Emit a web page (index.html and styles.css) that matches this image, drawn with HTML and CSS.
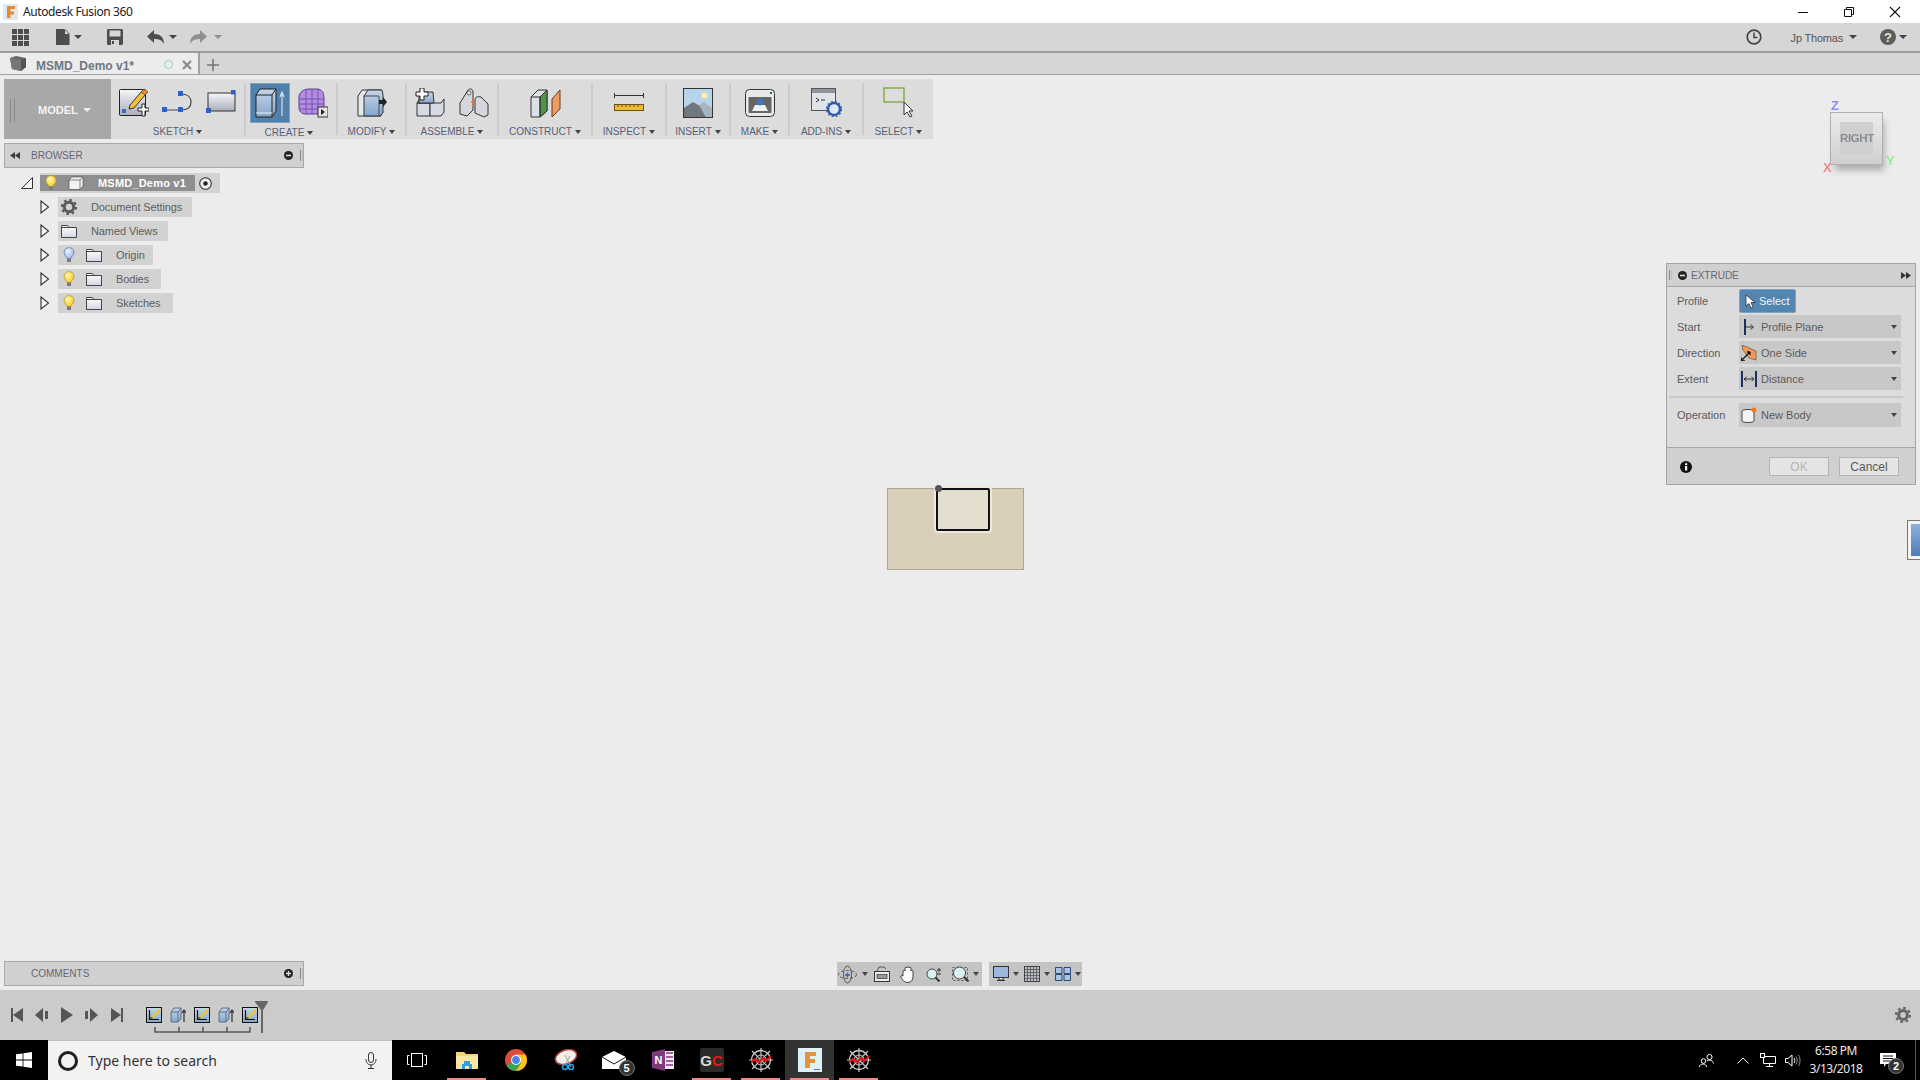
FILE: index.html
```html
<!DOCTYPE html>
<html lang="en">
<head>
<meta charset="utf-8">
<title>Autodesk Fusion 360</title>
<link rel="stylesheet" href="styles.css">
</head>
<body>
<svg class="defs" width="0" height="0">
  <defs>
    <linearGradient id="gBlue" x1="0" y1="0" x2="0" y2="1"><stop offset="0" stop-color="#c5d6ea"/><stop offset="1" stop-color="#86a5cc"/></linearGradient>
    <linearGradient id="gGrey" x1="0" y1="0" x2="0" y2="1"><stop offset="0" stop-color="#f6f6f8"/><stop offset="1" stop-color="#a9aebb"/></linearGradient>
    <linearGradient id="gFolder" x1="0" y1="0" x2="0" y2="1"><stop offset="0" stop-color="#fff"/><stop offset="1" stop-color="#d3d8e2"/></linearGradient>
    <radialGradient id="gBulbY" cx=".4" cy=".35" r=".7"><stop offset="0" stop-color="#fff8b0"/><stop offset="1" stop-color="#f2c81e"/></radialGradient>
    <radialGradient id="gBulbB" cx=".4" cy=".35" r=".7"><stop offset="0" stop-color="#eef3ff"/><stop offset="1" stop-color="#98b2e8"/></radialGradient>
    <symbol id="bulbY" viewBox="0 0 12 16"><path d="M6 .5a5 5 0 0 1 3 9l-1 2H4l-1-2a5 5 0 0 1 3-9z" fill="url(#gBulbY)" stroke="#b8982a" stroke-width=".7"/><rect x="4" y="11.500" width="4" height="3.500" fill="#7c7c7c"/></symbol>
    <symbol id="bulbB" viewBox="0 0 12 16"><path d="M6 .5a5 5 0 0 1 3 9l-1 2H4l-1-2a5 5 0 0 1 3-9z" fill="url(#gBulbB)" stroke="#6078a8" stroke-width=".7"/><rect x="4" y="11.500" width="4" height="3.500" fill="#7c7c7c"/></symbol>
    <symbol id="folder" viewBox="0 0 16 14"><path d="M.5 13.500V1.500h6l1.500 2h7.500v10z" fill="url(#gFolder)" stroke="#444"/><path d="M.5 3.500h7.500" stroke="#444"/></symbol>
    <symbol id="expand" viewBox="0 0 10 14"><path d="M1 1l7.500 6L1 13z" fill="#f4f4f4" stroke="#3e3e3e" stroke-width="1.200"/></symbol>
    <symbol id="tlSketch" viewBox="0 0 16 16"><rect x=".5" y=".5" width="15" height="15" fill="url(#gBlue)" stroke="#111"/><path d="M3.500 3v9.500H13" fill="none" stroke="#111" stroke-width="1.200"/><path d="M5 10l8-8 2 1-8 8-3 1z" fill="#f2c81e"/><path d="M5 10l-1 2 3-1z" fill="#222"/></symbol>
    <symbol id="tlExtrude" viewBox="0 0 16 16"><path d="M1 5l3-4h7v11l-3 3H1z" fill="url(#gBlue)" stroke="#5d6f8a"/><path d="M1 5h7v10M8 5l3-4" fill="none" stroke="#5d6f8a"/><path d="M14 15V4M12 6l2-3 2 3" fill="none" stroke="#333" stroke-width="1.200"/></symbol>
    <symbol id="spider" viewBox="0 0 24 24"><circle cx="12" cy="12" r="9.500" fill="none" stroke="#cfcfcf" stroke-width="1.300"/><circle cx="12" cy="12" r="5" fill="none" stroke="#cfcfcf"/><path d="M12 0v24M0 12h24M3 3l18 18M21 3L3 21" stroke="#cfcfcf" stroke-width="1.100"/><path d="M2 14l4-3 4 3 4-4 3 3 5-5" fill="none" stroke="#e01212" stroke-width="2.200"/></symbol>
  </defs>
</svg>

<header class="titlebar">
  <svg class="ic app-ic" width="15" height="16" viewBox="0 0 15 16"><rect width="15" height="16" fill="#dfe9f2"/><path d="M4 2h8v3H7.500v2.500H11v3H7.500V14H4z" fill="#e78a2e"/></svg>
  <span class="title-text">Autodesk Fusion 360</span>
  <div class="winctl">
    <svg class="ic" width="12" height="12" viewBox="0 0 12 12"><path d="M1 6.500h10" stroke="#111"/></svg>
    <svg class="ic" width="12" height="12" viewBox="0 0 12 12"><path d="M1.500 3.500h7v7h-7zM3.500 3.500v-2h7v7h-2" fill="none" stroke="#111"/></svg>
    <svg class="ic" width="12" height="12" viewBox="0 0 12 12"><path d="M1 1l10 10M11 1L1 11" stroke="#111" stroke-width="1.100"/></svg>
  </div>
</header>

<div class="menubar">
  <svg class="ic m-grid" width="17" height="17" viewBox="0 0 17 17"><path d="M0 0h5v5H0zM6 0h5v5H6zM12 0h5v5h-5zM0 6h5v5H0zM6 6h5v5H6zM12 6h5v5h-5zM0 12h5v5H0zM6 12h5v5H6zM12 12h5v5h-5z" fill="#4d4d4d"/></svg>
  <svg class="ic m-file" width="14" height="16" viewBox="0 0 14 16"><path d="M0 0h8l5.500 5.500V16H0zM9 0v5h5z" fill="#4d4d4d"/></svg>
  <span class="caret m-c1"></span>
  <svg class="ic m-save" width="16" height="16" viewBox="0 0 16 16"><path d="M1 0h14l1 1v14l-1 1H1l-1-1V1z" fill="#4d4d4d"/><rect x="2.500" y="1.500" width="11" height="6" fill="#d6d6d6"/><rect x="4" y="11" width="8" height="5" fill="#d6d6d6"/><rect x="5" y="12" width="2" height="3" fill="#4d4d4d"/></svg>
  <svg class="ic m-undo" width="17" height="14" viewBox="0 0 17 14"><path d="M7 0v4c6 0 10 3 10 10-2-4-5-5-10-5v4L0 6.500z" fill="#4d4d4d"/></svg>
  <span class="caret m-c2"></span>
  <svg class="ic m-redo" width="17" height="14" viewBox="0 0 17 14"><path d="M10 0v4C4 4 0 7 0 14c2-4 5-5 10-5v4l7-6.500z" fill="#8f8f8f"/></svg>
  <span class="caret m-c3"></span>
  <div class="menu-right">
    <svg class="ic" width="16" height="16" viewBox="0 0 16 16"><circle cx="8" cy="8" r="6.800" fill="none" stroke="#444" stroke-width="1.700"/><path d="M8 3.500V8.500h3.500" fill="none" stroke="#444" stroke-width="1.500"/></svg>
    <span class="user">Jp Thomas</span>
    <span class="caret m-c4"></span>
    <svg class="ic m-help" width="16" height="16" viewBox="0 0 16 16"><circle cx="8" cy="8" r="8" fill="#5d5d5d"/><text x="8" y="12.500" class="help-q">?</text></svg>
    <span class="caret m-c5"></span>
  </div>
</div>

<div class="tabbar">
  <div class="tab">
    <svg class="ic" width="16" height="15" viewBox="0 0 16 15"><path d="M0 2l6-2 10 2v9l-5 4-9-2z" fill="#666"/><path d="M0 2l11 2v11l-9-2z" fill="#777"/><path d="M11 4l5-2v9l-5 4z" fill="#555"/></svg>
    <span class="tab-name">MSMD_Demo v1*</span>
    <span class="tab-dot"></span>
    <svg class="ic tab-x" width="10" height="10" viewBox="0 0 10 10"><path d="M1 1l8 8M9 1L1 9" stroke="#8a8a8a" stroke-width="2.200"/></svg>
  </div>
  <svg class="ic tab-plus" width="12" height="12" viewBox="0 0 12 12"><path d="M6 0v12M0 6h12" stroke="#777" stroke-width="1.600"/></svg>
</div>

<main class="viewport">
  <div class="toolbar">
    <div class="model"><span class="grip"></span><span class="model-label">MODEL</span><span class="caret caret-w"></span></div>

    <div class="tg g-sketch">
      <div class="tg-icons icons-sketch">
        <svg class="ic" width="30" height="30" viewBox="0 0 30 30"><rect x=".5" y="1.500" width="26" height="26" rx="1" fill="url(#gGrey)" stroke="#222"/><path d="M11 17L23 3l4 3-12 14-5 1z" fill="#f2c233" stroke="#333"/><path d="M22 4l3-3 4 3-3 3z" fill="#e8893b" stroke="#333" stroke-width=".6"/><path d="M23 16h3v4h4v3h-4v5h-3v-5h-4v-3h4z" fill="#fff" stroke="#222"/><rect x="3" y="21" width="4" height="4" fill="#3a6ac4"/></svg>
        <svg class="ic" width="31" height="30" viewBox="0 0 31 30"><path d="M3 22h16M19 22c7 0 10-3 10-8s-4-8-10-8" fill="none" stroke="#444" stroke-width="1.200"/><rect x="0" y="19" width="5" height="5" fill="#2f62c6"/><rect x="16" y="19" width="5" height="5" fill="#2f62c6"/><rect x="16" y="3" width="5" height="5" fill="#2f62c6"/></svg>
        <svg class="ic" width="30" height="30" viewBox="0 0 30 30"><rect x="2" y="5" width="27" height="18" fill="url(#gGrey)" stroke="#333"/><rect x="25" y="2" width="4.500" height="4.500" fill="#2f62c6"/><rect x="0" y="20" width="5" height="5" fill="#2f62c6"/></svg>
      </div>
      <div class="tg-label">SKETCH<span class="caret"></span></div>
    </div>
    <span class="sep"></span>

    <div class="tg g-create">
      <div class="tg-icons gap8">
        <div class="active-tool">
          <svg class="ic" width="30" height="30" viewBox="0 0 30 30"><path d="M1 7l4-6h16v22l-4 6H1z" fill="url(#gBlue)" stroke="#222"/><path d="M1 7h16v22M17 7l4-6" fill="none" stroke="#222"/><path d="M1 25h16" stroke="#e9eef6"/><path d="M27 28V5M25 9l2-5 2 5" fill="none" stroke="#d7dde6" stroke-width="1.200"/></svg>
        </div>
        <svg class="ic" width="30" height="30" viewBox="0 0 30 30"><path d="M1 8c2-6 6-7 11-7h7c5 0 7 4 7 9v12c0 3-2 4-5 4H8c-5 0-7-3-7-7z" fill="#b28ce0" stroke="#5c3e8c"/><path d="M1 11h25M1 16h25M1 21h25M8 1v25M14 1v25M20 1v25" stroke="#6f4da8" stroke-width=".9"/><rect x="20" y="19" width="10" height="10" fill="#e4e4e4" stroke="#333"/><path d="M23 21l4 3-4 3z" fill="#222"/></svg>
      </div>
      <div class="tg-label">CREATE<span class="caret"></span></div>
    </div>
    <span class="sep"></span>

    <div class="tg g-modify">
      <div class="tg-icons">
        <svg class="ic" width="30" height="30" viewBox="0 0 30 30"><path d="M1 8l4-6h19v26H1z" fill="#e6e8ee" stroke="#333"/><path d="M7 8l4-6h14l1 5v18l-3 3H7z" fill="url(#gBlue)" stroke="#333"/><path d="M7 8h15v20" fill="none" stroke="#445"/><path d="M22 12h4V9l4 5-4 5v-3h-4z" fill="#222"/></svg>
      </div>
      <div class="tg-label">MODIFY<span class="caret"></span></div>
    </div>
    <span class="sep"></span>

    <div class="tg g-assemble">
      <div class="tg-icons gap14">
        <svg class="ic" width="30" height="30" viewBox="0 0 30 30"><path d="M2 15h13v13H2z" fill="#d6dbe3" stroke="#333"/><path d="M15 15h11l3-4v13l-3 4H15z" fill="#d6dbe3" stroke="#333"/><path d="M2 15l3-5h13l-3 5z" fill="#c6cad2" stroke="#333"/><path d="M4 4h14l1 11H4z" fill="url(#gBlue)" stroke="#333"/><path d="M5 0h4v4h4v4H9v4H5V8H1V4h4z" fill="#fff" stroke="#222"/></svg>
        <svg class="ic" width="30" height="30" viewBox="0 0 30 30"><path d="M1 15l8-13c2-2 5-1 5 2v18l-6 6-7-2z" fill="#d4d8de" stroke="#333"/><path d="M16 12c0-3 3-4 6-3l7 7v11l-4 2-9-4z" fill="#d4d8de" stroke="#333"/><path d="M14 10v8M12 14h4" stroke="#e8742a" stroke-width="1.400"/><circle cx="10" cy="5" r="2" fill="#f2f2f2" stroke="#333" stroke-width=".7"/></svg>
      </div>
      <div class="tg-label">ASSEMBLE<span class="caret"></span></div>
    </div>
    <span class="sep"></span>

    <div class="tg g-construct">
      <div class="tg-icons">
        <svg class="ic" width="31" height="30" viewBox="0 0 31 30"><path d="M1 9l7-7h9v21l-7 6H1z" fill="#dce0e6" stroke="#333"/><path d="M10 9l7-7v21l-7 6z" fill="#4f9344" stroke="#333"/><path d="M1 9h9v20" fill="none" stroke="#333"/><path d="M22 11l8-9v19l-8 8z" fill="#ee9a63" stroke="#6b3c1c"/></svg>
      </div>
      <div class="tg-label">CONSTRUCT<span class="caret"></span></div>
    </div>
    <span class="sep"></span>

    <div class="tg g-inspect">
      <div class="tg-icons">
        <svg class="ic" width="30" height="24" viewBox="0 0 30 24"><path d="M.5 2v5M29.500 2v5M.5 4.500h29" fill="none" stroke="#333"/><rect x=".5" y="13.500" width="29" height="6" fill="#ecbc37" stroke="#6b5514"/><path d="M4 14v2M8 14v2M12 14v2M16 14v2M20 14v2M24 14v2" stroke="#6b5514"/></svg>
      </div>
      <div class="tg-label">INSPECT<span class="caret"></span></div>
    </div>
    <span class="sep"></span>

    <div class="tg g-insert">
      <div class="tg-icons">
        <svg class="ic" width="30" height="30" viewBox="0 0 30 30"><rect x=".5" y=".5" width="29" height="29" fill="#b7d4ec" stroke="#333"/><path d="M1 29V20l9-6 7 4 6 11z" fill="#72767f"/><path d="M16 17l5-3 8 6v9h-6z" fill="#a8b4bd"/><rect x="19" y="5" width="5" height="5" fill="#fbf5c0" stroke="#f0e29a"/></svg>
      </div>
      <div class="tg-label">INSERT<span class="caret"></span></div>
    </div>
    <span class="sep"></span>

    <div class="tg g-make">
      <div class="tg-icons">
        <svg class="ic" width="30" height="28" viewBox="0 0 30 28"><rect x=".5" y=".5" width="29" height="27" rx="4" fill="#e9e9e9" stroke="#333"/><rect x="3.500" y="8" width="23" height="16" rx="1" fill="#666"/><path d="M7 22l3-6h10l3 6z" fill="#f0f0f0"/><path d="M12 10h6v4l-3 3-3-3z" fill="#3a78c8"/><rect x="25" y="3" width="2" height="2" fill="#1a7c2a"/></svg>
      </div>
      <div class="tg-label">MAKE<span class="caret"></span></div>
    </div>
    <span class="sep"></span>

    <div class="tg g-addins">
      <div class="tg-icons">
        <svg class="ic" width="31" height="29" viewBox="0 0 31 29"><rect x=".5" y=".5" width="24" height="22" fill="#dfe3ea" stroke="#555"/><rect x="1" y="1" width="23" height="4" fill="#8f939b"/><path d="M5 10l3 2-3 2M10 12h4" fill="none" stroke="#333"/><circle cx="23" cy="21" r="6" fill="#dfe8f6" stroke="#2e5aa6" stroke-width="2.400"/><circle cx="23" cy="21" r="7.500" fill="none" stroke="#2e5aa6" stroke-width="1.300" stroke-dasharray="2 2"/></svg>
      </div>
      <div class="tg-label">ADD-INS<span class="caret"></span></div>
    </div>
    <span class="sep"></span>

    <div class="tg g-select">
      <div class="tg-icons">
        <svg class="ic" width="31" height="31" viewBox="0 0 31 31"><rect x="1" y="1" width="20" height="14" fill="none" stroke="#6ea32a" stroke-width="1.200"/><path d="M21 15v13l3-3 3 5 2-1-3-5h4z" fill="#f3f3f3" stroke="#333"/></svg>
      </div>
      <div class="tg-label">SELECT<span class="caret"></span></div>
    </div>
  </div>

  <section class="panel browser">
    <svg class="ic" width="10" height="7" viewBox="0 0 10 7"><path d="M5 0v7L0 3.500zM10 0v7L5 3.500z" fill="#3a3a3a"/></svg>
    <span class="panel-title">BROWSER</span>
    <svg class="ic panel-btn" width="9" height="9" viewBox="0 0 9 9"><circle cx="4.500" cy="4.500" r="4.500" fill="#222"/><rect x="2" y="3.700" width="5" height="1.600" fill="#ddd"/></svg>
    <span class="panel-grip"></span>
  </section>

  <ul class="tree">
    <li class="root-row">
      <svg class="ic root-tri" width="12" height="12" viewBox="0 0 12 12"><path d="M.5 11.500L11.500.5v11z" fill="#f4f4f4" stroke="#333"/></svg>
      <div class="root-wrap">
        <div class="root-label">
          <svg class="ic bulb-root" width="12" height="16"><use href="#bulbY"/></svg>
          <svg class="ic" width="16" height="14" viewBox="0 0 16 14"><path d="M1 4l3-3h11v9l-3 3.500H1z" fill="#f2f2f2" stroke="#555" stroke-width=".7"/><path d="M1 4h11v9.500M12 4l3-3" fill="none" stroke="#555" stroke-width=".7"/></svg>
          <span class="root-name">MSMD_Demo v1</span>
        </div>
        <svg class="ic radio" width="13" height="13" viewBox="0 0 13 13"><circle cx="6.500" cy="6.500" r="5.800" fill="#f0f0f0" stroke="#333" stroke-width="1.100"/><circle cx="6.500" cy="6.500" r="2.200" fill="#222"/></svg>
      </div>
    </li>
    <li class="row">
      <svg class="ic" width="10" height="14"><use href="#expand"/></svg>
      <div class="node w-doc">
        <svg class="ic" width="16" height="16" viewBox="0 0 16 16"><circle cx="8" cy="8" r="4.700" fill="none" stroke="#5c5c5c" stroke-width="3"/><circle cx="8" cy="8" r="7" fill="none" stroke="#5c5c5c" stroke-width="2.200" stroke-dasharray="2.700 2.800"/></svg>
        <span class="node-text">Document Settings</span>
      </div>
    </li>
    <li class="row">
      <svg class="ic" width="10" height="14"><use href="#expand"/></svg>
      <div class="node w-views">
        <svg class="ic" width="16" height="14"><use href="#folder"/></svg>
        <span class="node-text">Named Views</span>
      </div>
    </li>
    <li class="row">
      <svg class="ic" width="10" height="14"><use href="#expand"/></svg>
      <div class="node w-origin">
        <svg class="ic bulb" width="12" height="16"><use href="#bulbB"/></svg>
        <svg class="ic" width="16" height="14"><use href="#folder"/></svg>
        <span class="node-text">Origin</span>
      </div>
    </li>
    <li class="row">
      <svg class="ic" width="10" height="14"><use href="#expand"/></svg>
      <div class="node w-bodies">
        <svg class="ic bulb" width="12" height="16"><use href="#bulbY"/></svg>
        <svg class="ic" width="16" height="14"><use href="#folder"/></svg>
        <span class="node-text">Bodies</span>
      </div>
    </li>
    <li class="row">
      <svg class="ic" width="10" height="14"><use href="#expand"/></svg>
      <div class="node w-sketches">
        <svg class="ic bulb" width="12" height="16"><use href="#bulbY"/></svg>
        <svg class="ic" width="16" height="14"><use href="#folder"/></svg>
        <span class="node-text">Sketches</span>
      </div>
    </li>
  </ul>

  <section class="panel comments">
    <span class="panel-title">COMMENTS</span>
    <svg class="ic panel-btn" width="9" height="9" viewBox="0 0 9 9"><circle cx="4.500" cy="4.500" r="4.500" fill="#222"/><path d="M2 4.500h5M4.500 2v5" stroke="#ddd" stroke-width="1.400"/></svg>
    <span class="panel-grip"></span>
  </section>

  <div class="viewcube">
    <span class="vc-z">Z</span>
    <div class="vc-face"><span class="vc-text">RIGHT</span></div>
    <span class="vc-y">Y</span>
    <span class="vc-x">X</span>
  </div>

  <div class="sketch"><span class="sketch-dot"></span><div class="sketch-inner"></div></div>

  <aside class="extrude">
    <div class="ex-head">
      <span class="ex-grip"></span>
      <svg class="ic" width="9" height="9" viewBox="0 0 9 9"><circle cx="4.500" cy="4.500" r="4.500" fill="#222"/><rect x="2" y="3.700" width="5" height="1.600" fill="#ddd"/></svg>
      <span class="ex-title">EXTRUDE</span>
      <svg class="ic ex-more" width="10" height="7" viewBox="0 0 10 7"><path d="M0 0v7l5-3.500zM5 0v7l5-3.500z" fill="#333"/></svg>
    </div>
    <div class="ex-body">
      <div class="ex-row first">
        <span class="ex-label">Profile</span>
        <div class="ex-select-btn">
          <svg class="ic" width="11" height="15" viewBox="0 0 11 15"><path d="M1 1v11l3-2.500 2 4.500 2-1-2-4.500h4z" fill="#fff" stroke="#333" stroke-width=".8"/></svg>
          <span>Select</span>
        </div>
      </div>
      <div class="ex-row">
        <span class="ex-label">Start</span>
        <div class="ex-drop">
          <svg class="ic" width="16" height="16" viewBox="0 0 16 16"><path d="M4 0v16" stroke="#16335f" stroke-width="2"/><path d="M5 8h7M9.500 5.500L12.500 8l-3 2.500" fill="none" stroke="#333"/></svg>
          <span>Profile Plane</span><span class="caret drop-caret"></span>
        </div>
      </div>
      <div class="ex-row">
        <span class="ex-label">Direction</span>
        <div class="ex-drop">
          <svg class="ic" width="16" height="16" viewBox="0 0 16 16"><path d="M1 0l14 6v9l-7-2-6-8z" fill="#ef9a5a" stroke="#7a4a20" stroke-width=".7"/><path d="M0 16L9 7M0 16v-4M0 16h4M9 7v3M9 7H6" stroke="#111" stroke-width="1.300" fill="none"/></svg>
          <span>One Side</span><span class="caret drop-caret"></span>
        </div>
      </div>
      <div class="ex-row">
        <span class="ex-label">Extent</span>
        <div class="ex-drop">
          <svg class="ic" width="16" height="16" viewBox="0 0 16 16"><path d="M1 0v16M15 0v16" stroke="#16335f" stroke-width="2"/><path d="M3 8h10M5.500 6L3 8l2.500 2M10.500 6L13 8l-2.500 2" fill="none" stroke="#333"/></svg>
          <span>Distance</span><span class="caret drop-caret"></span>
        </div>
      </div>
      <div class="ex-sep"></div>
      <div class="ex-row">
        <span class="ex-label">Operation</span>
        <div class="ex-drop tall">
          <svg class="ic" width="16" height="16" viewBox="0 0 16 16"><path d="M1 4c0-2 12-2 12 0v10c0 2-12 2-12 0z" fill="#f4f4f4" stroke="#444"/><circle cx="13" cy="3" r="2.500" fill="#f07a1c"/></svg>
          <span>New Body</span><span class="caret drop-caret"></span>
        </div>
      </div>
    </div>
    <div class="ex-foot">
      <svg class="ic ex-info" width="12" height="12" viewBox="0 0 12 12"><circle cx="6" cy="6" r="6" fill="#111"/><rect x="5" y="5" width="2.200" height="4.500" fill="#fff"/><rect x="5" y="2.300" width="2.200" height="1.800" fill="#fff"/></svg>
      <button class="btn btn-off">OK</button>
      <button class="btn">Cancel</button>
    </div>
  </aside>

  <div class="edge-thumb"><span></span></div>

  <div class="navbars">
    <div class="navgroup ng-a">
      <svg class="ic" width="19" height="19" viewBox="0 0 19 19"><ellipse cx="9.500" cy="9.500" rx="4" ry="8.500" fill="none" stroke="#555"/><ellipse cx="9.500" cy="9.500" rx="9" ry="4" fill="none" stroke="#555" stroke-dasharray="3 2"/><path d="M7 10h5M9.500 7.500v5" stroke="#2f62c6" stroke-width="1.300"/></svg>
      <span class="caret nav-c1"></span>
      <svg class="ic nav-b" width="16" height="16" viewBox="0 0 16 16"><rect x=".5" y="5.500" width="15" height="10" fill="#eee" stroke="#333"/><rect x="3" y="8.500" width="10" height="4" fill="#999" stroke="#333" stroke-width=".7"/><path d="M3 5l2-4h5l2 2" fill="none" stroke="#555"/></svg>
      <svg class="ic nav-c" width="16" height="17" viewBox="0 0 16 17"><path d="M3 10V5c0-1 2-1 2 0V2c0-1 2-1 2 0v-.5c0-1 2-1 2 0V2c0-1 2-1 2 0v3c0-1 2-1 2 0v6c0 3-2 5.500-5 5.500S3 15 1 11c-1-2 1-2 2-1z" fill="#fafafa" stroke="#333" stroke-width=".9"/></svg>
      <svg class="ic nav-c" width="16" height="15" viewBox="0 0 16 15"><circle cx="6" cy="7" r="5" fill="#d9f0f4" stroke="#444"/><path d="M9.500 10.500l4 4" stroke="#333" stroke-width="2"/><path d="M11 3h4M13 1v4M11 7h4" stroke="#333"/></svg>
      <svg class="ic nav-c" width="17" height="16" viewBox="0 0 17 16"><rect x=".5" y="1.500" width="15" height="13" fill="none" stroke="#555" stroke-dasharray="2 2"/><circle cx="7.500" cy="7" r="6" fill="#d9f0f4" stroke="#444"/><path d="M12 11l4.500 4.500" stroke="#333" stroke-width="2"/></svg>
      <span class="caret nav-c2"></span>
    </div>
    <div class="navgroup ng-b">
      <svg class="ic" width="16" height="16" viewBox="0 0 16 16"><rect x=".5" y=".5" width="15" height="11" fill="#9ab8de" stroke="#333"/><path d="M6 12v2h4v-2M4 14.500h8" fill="#eee" stroke="#333"/></svg>
      <span class="caret nav-c3"></span>
      <svg class="ic nav-d" width="16" height="16" viewBox="0 0 16 16"><rect x=".5" y=".5" width="15" height="15" fill="#b8bcc5" stroke="#444"/><path d="M3.500 1v14M6.500 1v14M9.500 1v14M12.500 1v14M1 3.500h14M1 6.500h14M1 9.500h14M1 12.500h14" stroke="#555" stroke-width=".8"/></svg>
      <span class="caret nav-c3"></span>
      <svg class="ic nav-d" width="16" height="14" viewBox="0 0 16 14"><path d="M.5.500h6.500v6H.5zM9 .5h6.500v6H9zM.5 7.500h6.500v6H.5zM9 7.500h6.500v6H9z" fill="#a9c3e2" stroke="#2c4a7a"/></svg>
      <span class="caret nav-c3"></span>
    </div>
  </div>
</main>

<div class="timeline">
  <svg class="ic" width="12" height="14" viewBox="0 0 12 14"><path d="M0 0h2v14H0zM12 0v14L2 7z" fill="#555"/></svg>
  <svg class="ic t-gap1" width="13" height="14" viewBox="0 0 13 14"><path d="M8 0v14L0 7zM10 3h3v8h-3z" fill="#555"/></svg>
  <svg class="ic t-gap2" width="12" height="16" viewBox="0 0 12 16"><path d="M0 0v16l12-8z" fill="#555"/></svg>
  <svg class="ic t-gap3" width="13" height="14" viewBox="0 0 13 14"><path d="M5 0v14l8-7zM0 3h3v8H0z" fill="#555"/></svg>
  <svg class="ic t-gap4" width="12" height="14" viewBox="0 0 12 14"><path d="M10 0h2v14h-2zM0 0v14l10-7z" fill="#555"/></svg>
  <div class="tl-items">
    <svg class="ic" width="16" height="16"><use href="#tlSketch"/></svg>
    <svg class="ic" width="16" height="16"><use href="#tlExtrude"/></svg>
    <svg class="ic" width="16" height="16"><use href="#tlSketch"/></svg>
    <svg class="ic" width="16" height="16"><use href="#tlExtrude"/></svg>
    <svg class="ic" width="16" height="16"><use href="#tlSketch"/></svg>
    <svg class="ic tl-bracket" width="97" height="6" viewBox="0 0 97 6"><path d="M1 0v5h95V0M25 0v5M49 0v5M73 0v5" fill="none" stroke="#5a5a5a" stroke-width="1.600"/></svg>
    <svg class="ic tl-marker" width="13" height="32" viewBox="0 0 13 32"><path d="M0 0h13v1l-5 8v23H6V9L0 1z" fill="#666"/></svg>
  </div>
  <svg class="ic tl-gear" width="16" height="16" viewBox="0 0 16 16"><circle cx="8" cy="8" r="4.400" fill="none" stroke="#666" stroke-width="3"/><circle cx="8" cy="8" r="7" fill="none" stroke="#666" stroke-width="2.200" stroke-dasharray="2.700 2.800"/></svg>
</div>

<footer class="taskbar">
  <div class="tb-start">
    <svg class="ic" width="16" height="16" viewBox="0 0 16 16"><path d="M0 2.300l6.600-.9v6.200H0zM7.400 1.300L16 0v7.600H7.400zM0 8.400h6.600v6.200L0 13.700zM7.400 8.400H16V16l-8.600-1.300z" fill="#fff"/></svg>
  </div>
  <div class="tb-search">
    <span class="cortana"></span>
    <span class="search-text">Type here to search</span>
    <svg class="ic mic" width="12" height="17" viewBox="0 0 12 17"><rect x="3.500" y=".5" width="5" height="10" rx="2.500" fill="none" stroke="#333"/><path d="M1 7c0 8 10 8 10 0M6 12.500v4M3 16.500h6" fill="none" stroke="#333"/></svg>
  </div>
  <div class="tb-view">
    <svg class="ic" width="20" height="14" viewBox="0 0 20 14"><rect x="4.500" y=".5" width="11" height="13" fill="none" stroke="#fff"/><path d="M2.500 2.500H.5v9h2M17.500 2.500h2v9h-2" fill="none" stroke="#fff"/></svg>
  </div>
  <div class="tb-app running">
    <svg class="ic" width="22" height="18" viewBox="0 0 22 18"><path d="M0 1h8l2 2h12v15H0z" fill="#f7d774"/><path d="M0 5h22v13H0z" fill="#fbe7a2"/><path d="M6 13h10v5h-3v-3H9v3H6z" fill="#2f9fe0"/><path d="M8 10h6v3H8z" fill="#2f9fe0"/></svg>
  </div>
  <div class="tb-app">
    <svg class="ic" width="22" height="22" viewBox="0 0 22 22"><circle cx="11" cy="11" r="11" fill="#dd4b39"/><path d="M11 11L1.500 16.500A11 11 0 0 0 11 22l5-8z" fill="#3aa655"/><path d="M11 5.500h9.500A11 11 0 0 1 11 22l5-8z" fill="#f6c51c"/><circle cx="11" cy="11" r="5" fill="#fff"/><circle cx="11" cy="11" r="3.900" fill="#4a86e8"/></svg>
  </div>
  <div class="tb-app">
    <svg class="ic" width="24" height="22" viewBox="0 0 24 22"><ellipse cx="13" cy="8" rx="11" ry="7" transform="rotate(-20 13 8)" fill="#f4efe8" stroke="#b03a3a" stroke-width="1.500"/><path d="M12 6l6 12M17 7l-5 9" stroke="#999"/><circle cx="18" cy="18" r="2.500" fill="none" stroke="#2f9fe0" stroke-width="1.500"/><circle cx="12" cy="18" r="2.500" fill="none" stroke="#2f9fe0" stroke-width="1.500"/></svg>
  </div>
  <div class="tb-app">
    <div class="mail-wrap">
      <svg class="ic" width="24" height="18" viewBox="0 0 24 18"><path d="M0 6L12 0l12 6v12H0z" fill="#fff"/><path d="M0 6l12 7 12-7" fill="none" stroke="#111" stroke-width="1"/></svg>
      <span class="badge badge-mail">5</span>
    </div>
  </div>
  <div class="tb-app">
    <svg class="ic" width="22" height="22" viewBox="0 0 22 22"><rect x="6" y="2" width="16" height="18" fill="#f2eaf6"/><path d="M14 4h7M14 8h7M14 12h7M14 16h7" stroke="#80397b" stroke-width="1.600"/><path d="M0 3l13-3v22L0 19z" fill="#80397b"/><text x="6.500" y="15" class="on-n">N</text></svg>
  </div>
  <div class="tb-app running">
    <span class="gc-logo"><span class="gc-g">G</span><span class="gc-c">C</span></span>
  </div>
  <div class="tb-app running">
    <svg class="ic" width="24" height="24"><use href="#spider"/></svg>
  </div>
  <div class="tb-app running active">
    <svg class="ic" width="24" height="24" viewBox="0 0 24 24"><rect width="24" height="24" fill="#dff1fb"/><path d="M7 4h11v4h-6v3h5v4h-5v5H7z" fill="#e7933a"/><path d="M16 21h6v1h-6z" fill="#3a7fd0"/></svg>
  </div>
  <div class="tb-app running">
    <svg class="ic" width="24" height="24"><use href="#spider"/></svg>
  </div>
  <div class="tb-tray">
    <svg class="ic" width="15" height="15" viewBox="0 0 15 15"><circle cx="4.500" cy="8" r="2.300" fill="none" stroke="#fff"/><circle cx="10.500" cy="4" r="2.600" fill="none" stroke="#fff"/><path d="M.5 14c0-4 7-4 7 0M8 7.500c3-1 6 0 6.500 3" fill="none" stroke="#fff"/></svg>
    <svg class="ic tray-up" width="12" height="7" viewBox="0 0 12 7"><path d="M.5 6.500L6 1l5.500 5.500" fill="none" stroke="#fff"/></svg>
    <svg class="ic tray-net" width="16" height="14" viewBox="0 0 16 14"><path d="M3.500 3.500h12v7h-12zM9.500 10.500v3M6 13.500h7" fill="none" stroke="#fff"/><rect x=".5" y=".5" width="4" height="4" fill="#111" stroke="#fff"/></svg>
    <svg class="ic tray-vol" width="16" height="13" viewBox="0 0 16 13"><path d="M.5 4.500h2.500L7 1v11L3 8.500H.5z" fill="none" stroke="#fff"/><path d="M9 4c1 1.500 1 3.500 0 5" fill="none" stroke="#fff"/><path d="M11 2.500c1.500 2.500 1.500 5.500 0 8M13.500 1c2 3 2 8 0 11" fill="none" stroke="#999"/></svg>
    <div class="clock"><span>6:58 PM</span><span>3/13/2018</span></div>
    <div class="notify">
      <svg class="ic" width="16" height="15" viewBox="0 0 16 15"><path d="M0 0h16v11H6l-2 3v-3H0z" fill="#fff"/><path d="M3 3h10M3 5.500h10M3 8h7" stroke="#111"/></svg>
      <span class="badge badge-note">2</span>
    </div>
    <span class="tb-desk"></span>
  </div>
</footer>
</body>
</html>
```

FILE: styles.css
```css
* { box-sizing: border-box; }
html, body { margin: 0; padding: 0; height: 100%; }
body {
  width: 1920px; height: 1080px; overflow: hidden;
  display: flex; flex-direction: column;
  font-family: "Liberation Sans", Arial, sans-serif;
  background: #ececec; color: #555;
}
.defs { position: absolute; width: 0; height: 0; }
.ic { display: block; flex: none; }

.caret {
  display: inline-block; flex: none; width: 0; height: 0;
  border-left: 4px solid transparent; border-right: 4px solid transparent;
  border-top: 4px solid #444;
}

/* title bar */
.titlebar { height: 23px; flex: none; background: #fff; display: flex; align-items: center; padding-left: 3px; }
.title-text { margin-left: 5px; font-family: "Noto Sans", sans-serif; font-size: 12px; letter-spacing: -.4px; color: #222; }
.winctl { margin-left: auto; display: flex; gap: 34px; padding-right: 19px; }

/* menu bar */
.menubar { height: 30px; flex: none; background: #d6d6d6; border-bottom: 2px solid #9c9c9c; display: flex; align-items: center; padding-left: 12px; }
.m-file { margin-left: 27px; }
.m-c1 { margin-left: 4px; }
.m-save { margin-left: 25px; }
.m-undo { margin-left: 24px; }
.m-c2 { margin-left: 5px; }
.m-redo { margin-left: 13px; }
.m-c3 { margin-left: 7px; border-top-color: #8f8f8f; }
.menu-right { margin-left: auto; display: flex; align-items: center; padding-right: 13px; }
.user { margin-left: 29px; margin-top: 1px; font-size: 11px; color: #555; letter-spacing: -.2px; }
.m-c4 { margin-left: 6px; }
.m-help { margin-left: 23px; }
.m-c5 { margin-left: 3px; }
.help-q { font: bold 13px "Liberation Sans", sans-serif; fill: #e4e4e4; text-anchor: middle; }

/* tabs */
.tabbar { height: 22px; flex: none; background: #d6d6d6; border-bottom: 1px solid #a0a0a0; display: flex; align-items: center; }
.tab { width: 200px; height: 21px; background: #ececec; border-right: 2px solid #a0a0a0; display: flex; align-items: center; padding-left: 10px; }
.tab-name { margin-left: 10px; margin-top: 4px; font-size: 12px; font-weight: bold; color: #6f7683; width: 123px; }
.tab-dot { width: 9px; height: 9px; border-radius: 50%; border: 1.500px solid #8fd6c6; margin-left: 5px; margin-top: 2px; }
.tab-x { margin-left: 9px; margin-top: 2px; }
.tab-plus { margin-left: 7px; margin-top: 2px; }

/* viewport */
.viewport { position: relative; flex: 1; min-height: 0; background: #ececec; display: flex; flex-direction: column; padding: 4px 0 4px 4px; }

.toolbar { display: flex; align-self: flex-start; height: 60px; width: 929px; background: #dcdcdc; flex: none; }
.model { width: 107px; background: #a8a8a8; display: flex; align-items: center; padding-left: 6px; padding-top: 2px; }
.grip { width: 5px; height: 23px; border-left: 1px solid #8a8a8a; border-right: 1px solid #8a8a8a; }
.model-label { margin-left: 23px; font-size: 11px; font-weight: bold; color: #f4f4f4; }
.caret-w { margin-left: 5px; border-top-color: #f0f0f0; }

.sep { width: 2px; height: 52px; margin-top: 4px; background: #cbcbcb; flex: none; }
.tg { flex: none; display: flex; flex-direction: column; align-items: center; padding-top: 4px; }
.tg-icons { height: 40px; display: flex; align-items: center; justify-content: center; }
.tg-label { height: 15px; margin-top: 2px; line-height: 15px; font-size: 10px; color: #55607a; white-space: nowrap; display: flex; align-items: center; }
.tg-label .caret { margin-left: 3px; border-left-width: 3px; border-right-width: 3px; border-top-width: 4px; }
.gap14 { gap: 14px; }
.gap8 { gap: 8px; }
.icons-sketch { gap: 13px; }
.g-sketch { width: 133px; }
.g-create { width: 90px; padding-right: 4px; }
.g-modify { width: 67px; }
.g-assemble { width: 90px; }
.g-construct { width: 92px; }
.g-inspect { width: 72px; }
.g-insert { width: 62px; }
.g-make { width: 57px; }
.g-addins { width: 72px; }
.g-select { width: 69px; }
.active-tool { width: 40px; height: 40px; background: #5180ab; border: 1px solid #7ea2c2; display: flex; align-items: center; justify-content: center; }

/* panels */
.panel { width: 300px; height: 25px; background: #d0d0d0; border: 1px solid #a8a8a8; display: flex; align-items: center; flex: none; position: relative; }
.panel-title { font-size: 10px; color: #667; }
.panel-btn { margin-left: auto; margin-right: 7px; }
.panel-grip { width: 3px; height: 11px; border-left: 1px solid #8a8a8a; border-right: 1px solid #c0c0c0; }
.browser { margin-top: 4px; padding-left: 5px; }
.browser .panel-title { margin-left: 11px; }
.comments { margin-top: auto; }
.comments .panel-title { margin-left: 26px; }

/* tree */
.tree { list-style: none; margin: 3px 0 0; padding: 0; font-size: 11px; color: #5e5e5e; }
.root-row { display: flex; align-items: center; height: 24px; padding-left: 17px; }
.root-tri { margin-right: 7px; }
.root-wrap { display: flex; align-items: center; width: 180px; height: 20px; background: #d2d2d2; }
.root-label { width: 155px; height: 16px; background: #8f8f8f; display: flex; align-items: center; padding-left: 5px; }
.bulb-root { margin-right: 11px; }
.root-name { margin-left: 14px; font-weight: bold; color: #fff; letter-spacing: .2px; }
.radio { margin-left: 4px; }
.row { display: flex; align-items: center; height: 24px; padding-left: 36px; gap: 8px; }
.node { height: 20px; background: #d2d2d2; display: flex; align-items: center; padding-left: 3px; }
.bulb { margin-left: 2px; margin-right: 11px; }
.node-text { margin-left: 14px; letter-spacing: -.1px; }
.w-doc { width: 134px; }
.w-views { width: 110px; }
.w-origin { width: 95px; }
.w-bodies { width: 103px; }
.w-sketches { width: 115px; }

/* view cube */
.viewcube { position: absolute; left: 1818px; top: 25px; width: 90px; height: 75px; filter: blur(.7px); }
.vc-face { position: absolute; left: 12px; top: 12px; width: 53px; height: 53px; border: 1px solid #b0b0b0; background: linear-gradient(#ececec, #cfcfcf); box-shadow: 3px 7px 7px -2px #aaa; display: flex; align-items: center; justify-content: center; }
.vc-text { background: #cfcfcf; width: 33px; height: 33px; line-height: 33px; text-align: center; font-size: 11.500px; font-weight: bold; color: #878b92; letter-spacing: -.4px; }
.vc-z, .vc-y, .vc-x { position: absolute; font-size: 13px; font-weight: bold; }
.vc-z { left: 13px; top: -2px; color: #8a8cf5; }
.vc-y { left: 68px; top: 53px; color: #8cf08c; }
.vc-x { left: 5px; top: 60px; color: #f08a8a; }

/* sketch */
.sketch { position: absolute; left: 887px; top: 413px; width: 137px; height: 82px; background: #d9cfba; border: 1px solid #b0a594; }
.sketch-inner { position: absolute; left: 48px; top: -1px; width: 54px; height: 43px; background: #e4decf; border: 2px solid #111; border-radius: 2px; box-shadow: 0 0 0 2px #eee9dc; }
.sketch-dot { position: absolute; left: 47px; top: -4px; width: 7px; height: 7px; border-radius: 50%; background: #555; z-index: 1; }

/* extrude */
.extrude { position: absolute; left: 1666px; top: 188px; width: 250px; height: 222px; border: 1px solid #a4a4a4; background: #dcdcdc; display: flex; flex-direction: column; font-size: 11px; color: #5a5a5a; }
.ex-head { height: 23px; background: #d0d0d0; border-bottom: 1px solid #a8a8a8; display: flex; align-items: center; flex: none; padding-left: 2px; }
.ex-grip { width: 3px; height: 10px; border-left: 1px solid #8a8a8a; border-right: 1px solid #c0c0c0; margin-right: 6px; }
.ex-title { margin-left: 4px; font-size: 10px; color: #667; }
.ex-more { margin-left: auto; margin-right: 4px; }
.ex-body { flex: 1; display: flex; flex-direction: column; padding: 2px 0 0 10px; gap: 3px; }
.ex-row { display: flex; align-items: center; }
.ex-row.first { margin-bottom: -1px; }
.ex-label { width: 62px; flex: none; }
.ex-select-btn { width: 57px; height: 24px; background: #5285b0; border: 1px solid #79a3c5; border-radius: 2px; display: flex; align-items: center; color: #f2f5f8; padding-left: 5px; gap: 3px; }
.ex-drop { width: 162px; height: 23px; background: #c8c8c8; border-radius: 1px; display: flex; align-items: center; padding-left: 2px; gap: 4px; }
.ex-drop.tall { height: 24px; }
.drop-caret { margin-left: auto; margin-right: 4px; border-left-width: 3px; border-right-width: 3px; border-top-color: #444; }
.ex-sep { height: 2px; width: 234px; margin: 3px 0 2px -8px; background: #c8c8c8; }
.ex-foot { height: 37px; flex: none; background: #d0d0d0; border-top: 1px solid #a8a8a8; display: flex; align-items: center; padding-left: 13px; padding-top: 1px; }
.ex-info { margin-right: 77px; }
.btn { width: 60px; height: 19px; padding: 0; background: #e4e4e4; border: 1px solid #b4b4b4; font: 12px "Liberation Sans", sans-serif; color: #5a5a5a; margin-right: 10px; }
.btn-off { color: #b4b4b4; }

.edge-thumb { position: absolute; right: 0; top: 445px; width: 13px; height: 40px; border: 1px solid #777; border-right: 0; padding: 3px 0 3px 3px; background: #f4f4f4; }
.edge-thumb span { display: block; height: 100%; background: linear-gradient(#8cb0dc, #4e7cba); }

/* nav bars */
.navbars { position: absolute; left: 837px; bottom: 4px; display: flex; gap: 7px; height: 24px; }
.navgroup { background: #c4c4c4; display: flex; align-items: center; height: 24px; }
.ng-a { width: 145px; padding-left: 1px; }
.ng-b { width: 93px; padding-left: 4px; }
.nav-c1 { margin-left: 5px; border-left-width: 3px; border-right-width: 3px; }
.nav-b { margin-left: 6px; }
.nav-c { margin-left: 10px; }
.nav-c2, .nav-c3 { margin-left: 4px; border-left-width: 3px; border-right-width: 3px; }
.nav-d { margin-left: 5px; }

/* timeline */
.timeline { height: 50px; flex: none; background: #cbcbcb; display: flex; align-items: center; padding-left: 11px; padding-bottom: 1px; }
.t-gap1 { margin-left: 12px; }
.t-gap2 { margin-left: 13px; }
.t-gap3 { margin-left: 12px; }
.t-gap4 { margin-left: 13px; }
.tl-items { position: relative; margin-left: 23px; display: flex; gap: 8px; align-items: center; }
.tl-bracket { position: absolute; left: 8px; top: 20px; }
.tl-marker { position: absolute; left: 109px; top: -6px; }
.tl-gear { margin-left: auto; margin-right: 9px; }

/* taskbar */
.taskbar { height: 40px; flex: none; background: #000; display: flex; }
.tb-start { width: 48px; display: flex; align-items: center; justify-content: center; }
.tb-search { width: 344px; background: #f2f2f2; border-top: 1px solid #bdbdbd; display: flex; align-items: center; padding-left: 10px; }
.cortana { width: 20px; height: 20px; border-radius: 50%; border: 3px solid #1f1f1f; }
.search-text { margin-left: 10px; font-family: "Noto Sans", sans-serif; font-size: 14px; color: #333; }
.mic { margin-left: auto; margin-right: 15px; }
.tb-view { width: 50px; display: flex; align-items: center; justify-content: center; }
.tb-app { width: 49px; display: flex; align-items: center; justify-content: center; position: relative; }
.tb-app.running::after { content: ""; position: absolute; left: 5px; right: 5px; bottom: 0; height: 2px; background: #f08a8a; }
.tb-app.active { background: #333; }
.mail-wrap { position: relative; }
.badge { position: absolute; width: 16px; height: 16px; border-radius: 50%; border: 1px solid #777; background: #333; color: #fff; font: bold 11px/14px "Liberation Sans", sans-serif; text-align: center; }
.badge-mail { right: -9px; bottom: -7px; }
.badge-note { right: -8px; bottom: -6px; }
.on-n { font: bold 11px "Liberation Sans", sans-serif; fill: #fff; text-anchor: middle; }
.gc-logo { width: 24px; height: 24px; background: #2b2b2b; border-radius: 2px; display: flex; align-items: center; justify-content: center; font: bold 15px "Liberation Sans", sans-serif; }
.gc-g { color: #d8d8d8; }
.gc-c { color: #e11b12; }
.tb-tray { flex: 1; display: flex; align-items: center; padding-left: 816px; color: #fff; }
.tray-up { margin-left: 23px; }
.tray-net { margin-left: 11px; }
.tray-vol { margin-left: 9px; }
.clock { margin-left: 2px; width: 66px; display: flex; flex-direction: column; align-items: center; font-family: "Noto Sans", sans-serif; font-size: 12px; line-height: 18px; letter-spacing: -.45px; color: #e8e8e8; }
.notify { position: relative; margin-left: 11px; }
.tb-desk { margin-left: auto; margin-right: 4px; width: 1px; height: 100%; background: #555; }
```
